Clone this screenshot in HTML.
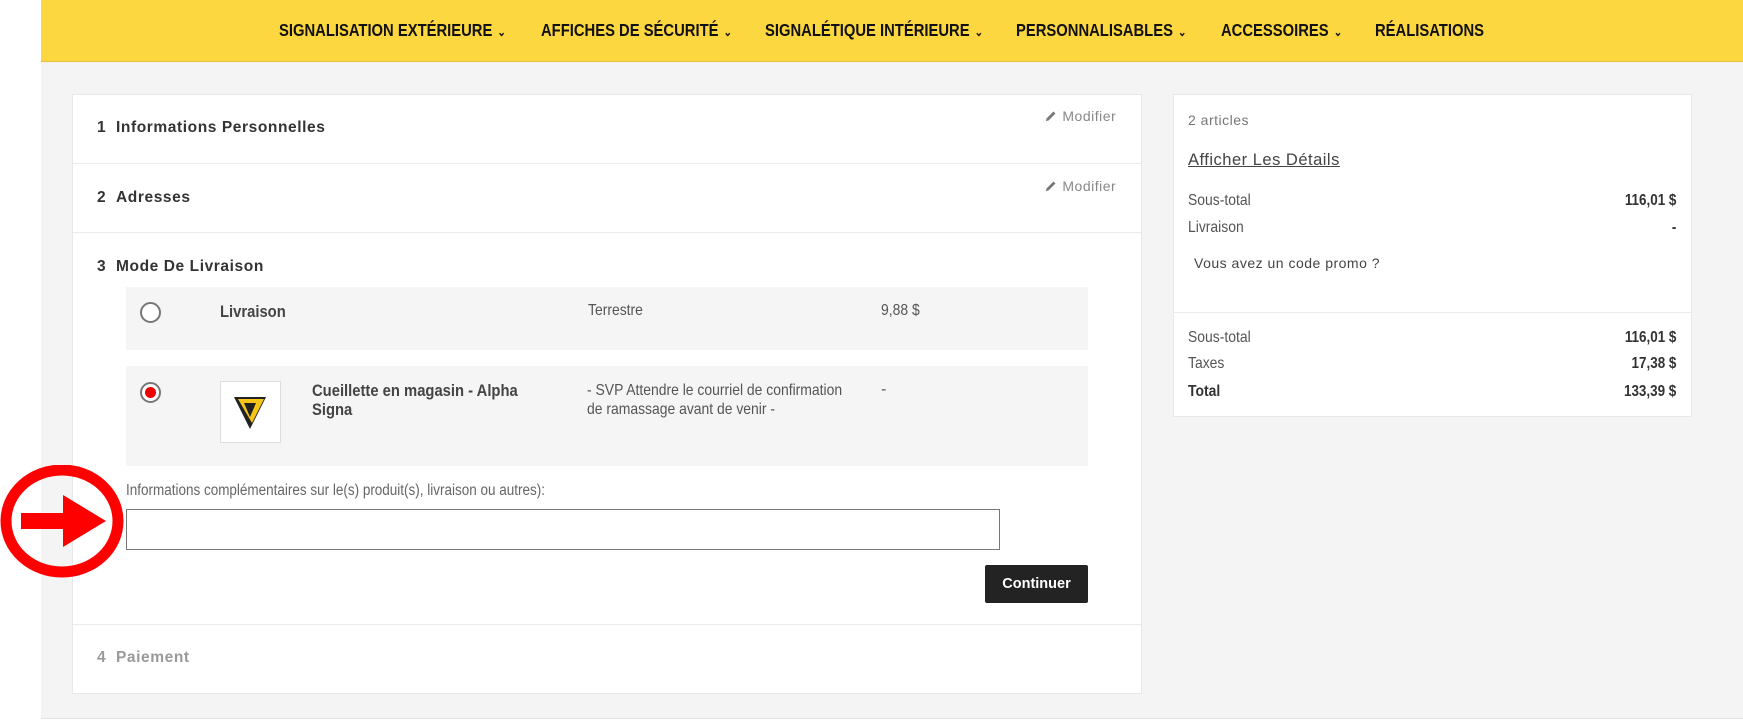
<!DOCTYPE html>
<html><head><meta charset="utf-8"><style>
*{margin:0;padding:0;box-sizing:border-box}
body{width:1743px;height:721px;overflow:hidden;background:#fff;font-family:"Liberation Sans",sans-serif;color:#333;position:relative}
.a{position:absolute;white-space:nowrap}
.c{transform:scaleX(.87);transform-origin:left top}
.cr{transform:scaleX(.84);transform-origin:right top}
#bg{left:41px;top:0;width:1702px;height:719px;background:#f4f4f4;border-bottom:1px solid #e2e2e2}
#nav{left:41px;top:0;width:1702px;height:62px;background:#fdd73f;border-bottom:1px solid #e6c23a}
.n{top:20px;font-weight:bold;font-size:17.5px;color:#111;transform:scaleX(.845);transform-origin:left top}
.n small{font-size:12px;margin-left:6px}
.card{background:#fff;border:1px solid #e8e8e8}
.h{font-size:16px;color:#333;letter-spacing:0.6px;font-weight:600;transform:scaleX(.97);transform-origin:left top}
.mod{font-size:14px;color:#888;letter-spacing:0.5px}
.line{height:1px;background:#ececec}
.row{background:#f5f5f5}
.t{font-size:16px;color:#555}
.r{font-weight:bold;color:#333;font-size:16px}
</style></head><body>
<div class="a" id="bg"></div>
<div class="a" id="nav"></div>
<div class="a n" style="left:279px">SIGNALISATION EXTÉRIEURE<small>⌄</small></div>
<div class="a n" style="left:541px">AFFICHES DE SÉCURITÉ<small>⌄</small></div>
<div class="a n" style="left:765px">SIGNALÉTIQUE INTÉRIEURE<small>⌄</small></div>
<div class="a n" style="left:1016px">PERSONNALISABLES<small>⌄</small></div>
<div class="a n" style="left:1221px">ACCESSOIRES<small>⌄</small></div>
<div class="a n" style="left:1375px">RÉALISATIONS</div>

<div class="a card" style="left:72px;top:94px;width:1070px;height:600px"></div>
<div class="a h" style="left:97px;top:119px">1&nbsp;&nbsp;Informations Personnelles</div>
<div class="a mod" style="left:1044px;top:108px"><svg width="14" height="14" viewBox="0 0 14 14" style="vertical-align:-2px"><path d="M2 12 L2.5 9.5 L9.5 2.5 L11.5 4.5 L4.5 11.5 Z" fill="#777"/></svg> Modifier</div>
<div class="a line" style="left:73px;top:163px;width:1068px"></div>
<div class="a h" style="left:97px;top:189px">2&nbsp;&nbsp;Adresses</div>
<div class="a mod" style="left:1044px;top:178px"><svg width="14" height="14" viewBox="0 0 14 14" style="vertical-align:-2px"><path d="M2 12 L2.5 9.5 L9.5 2.5 L11.5 4.5 L4.5 11.5 Z" fill="#777"/></svg> Modifier</div>
<div class="a line" style="left:73px;top:232px;width:1068px"></div>
<div class="a h" style="left:97px;top:258px">3&nbsp;&nbsp;Mode De Livraison</div>

<div class="a row" style="left:126px;top:287px;width:962px;height:63px"></div>
<div class="a" style="left:140px;top:302px;width:21px;height:21px;border-radius:50%;border:2px solid #777;background:#fff"></div>
<div class="a c" style="left:220px;top:302px;font-size:17px;font-weight:bold;color:#444">Livraison</div>
<div class="a t c" style="left:588px;top:302px">Terrestre</div>
<div class="a t c" style="left:881px;top:302px">9,88 $</div>

<div class="a row" style="left:126px;top:366px;width:962px;height:100px"></div>
<div class="a" style="left:140px;top:382px;width:21px;height:21px;border-radius:50%;border:2px solid #777;background:#fff"></div>
<div class="a" style="left:145px;top:387px;width:11px;height:11px;border-radius:50%;background:#e00"></div>
<div class="a" style="left:220px;top:381px;width:61px;height:62px;background:#fff;border:1px solid #ddd"></div>
<svg class="a" style="left:232px;top:395px" width="36" height="36" viewBox="0 0 36 36"><path d="M2 2 L34 2 L18 34 Z" fill="#222"/><path d="M6 4 L32 4 L20 28 Z" fill="#f5c518"/><path d="M12 8 L24 8 L18 22 Z" fill="#222"/></svg>
<div class="a c" style="left:312px;top:381px;font-size:17px;font-weight:bold;color:#444;line-height:19px">Cueillette en magasin - Alpha<br>Signa</div>
<div class="a t c" style="left:587px;top:381px;line-height:19px">- SVP Attendre le courriel de confirmation<br>de ramassage avant de venir -</div>
<div class="a t" style="left:881px;top:381px">-</div>

<div class="a c" style="left:126px;top:482px;font-size:15.5px;color:#666">Informations complémentaires sur le(s) produit(s), livraison ou autres):</div>
<div class="a" style="left:126px;top:509px;width:874px;height:41px;border:1px solid #777;background:#fff"></div>
<div class="a" style="left:985px;top:565px;width:103px;height:38px;background:#232323;border-radius:2px;color:#fff;font-weight:bold;font-size:14.5px;text-align:center;line-height:38px">Continuer</div>
<div class="a line" style="left:73px;top:624px;width:1068px"></div>
<div class="a h" style="left:97px;top:649px;color:#9a9a9a">4&nbsp;&nbsp;Paiement</div>

<svg class="a" style="left:0;top:465px" width="125" height="118" viewBox="0 0 125 118"><ellipse cx="62" cy="56" rx="56" ry="51" fill="none" stroke="#f00" stroke-width="11"/><path d="M21 48 L63 48 L63 30 L106 56 L63 82 L63 64 L21 64 Z" fill="#f00"/></svg>

<div class="a card" style="left:1173px;top:94px;width:519px;height:323px"></div>
<div class="a" style="left:1188px;top:112px;font-size:14px;color:#777;letter-spacing:0.5px">2 articles</div>
<div class="a" style="left:1188px;top:151px;font-size:16.5px;color:#444;letter-spacing:0.5px;text-decoration:underline">Afficher Les Détails</div>
<div class="a t c" style="left:1188px;top:192px">Sous-total</div><div class="a r cr" style="right:67px;top:192px">116,01 $</div>
<div class="a t c" style="left:1188px;top:219px">Livraison</div><div class="a r cr" style="right:67px;top:219px">-</div>
<div class="a" style="left:1194px;top:255px;font-size:14px;color:#444;letter-spacing:0.5px">Vous avez un code promo ?</div>
<div class="a line" style="left:1174px;top:312px;width:517px"></div>
<div class="a t c" style="left:1188px;top:329px">Sous-total</div><div class="a r cr" style="right:67px;top:329px">116,01 $</div>
<div class="a t c" style="left:1188px;top:355px">Taxes</div><div class="a r cr" style="right:67px;top:355px">17,38 $</div>
<div class="a t c" style="left:1188px;top:383px;font-weight:bold;color:#333">Total</div><div class="a r cr" style="right:67px;top:383px">133,39 $</div>
</body></html>
